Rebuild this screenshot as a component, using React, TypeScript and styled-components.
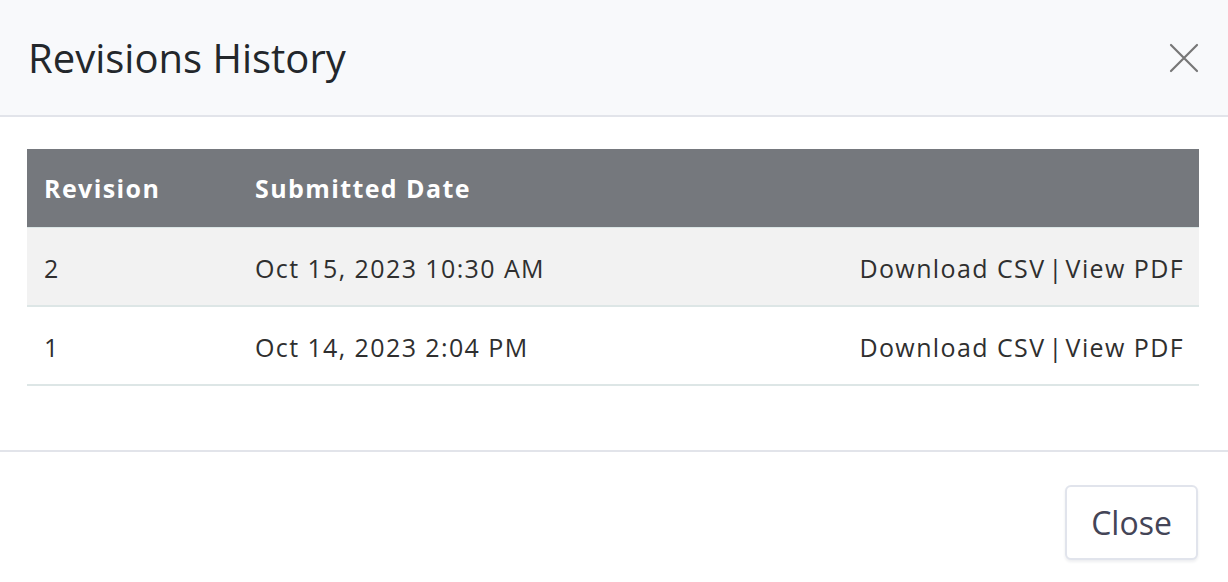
import React from "react";
import styled, { createGlobalStyle } from "styled-components";

const Global = createGlobalStyle`
  html, body { margin: 0; padding: 0; background: #ffffff; }
  body { font-family: "Open Sans", "Liberation Sans", sans-serif; }
`;

const Modal = styled.div`
  width: 1228px;
  height: 582px;
  display: flex;
  flex-direction: column;
  background: #ffffff;
  overflow: hidden;
`;

const Header = styled.header`
  height: 117px;
  flex: none;
  box-sizing: border-box;
  display: flex;
  align-items: center;
  justify-content: space-between;
  padding: 0 29px 0 28px;
  background: #f8f9fb;
  border-bottom: 2px solid #e2e4ea;
`;

const Title = styled.h1`
  margin: 0;
  font-size: 40px;
  font-weight: 400;
  color: #23272b;
  letter-spacing: 0;
`;

const CloseIcon = styled.button`
  width: 30px;
  height: 30px;
  padding: 0;
  border: 0;
  background: transparent;
  display: flex;
  align-items: center;
  justify-content: center;
  cursor: pointer;
`;

const Body = styled.div`
  padding: 32px 29px 64px 27px;
  border-bottom: 2px solid #e2e4ea;
`;

const Table = styled.table`
  width: 100%;
  border-collapse: collapse;
  font-size: 25px;
  letter-spacing: 1.4px;
  color: #2f2f2f;
`;

const HeadCell = styled.th<{ $w?: number }>`
  background: #75787d;
  color: #ffffff;
  font-weight: 700;
  text-align: left;
  height: 78px;
  padding: 0 16px 0 17px;
  border-bottom: 1px solid #dbe6e6;
  width: ${(p) => (p.$w ? `${p.$w}px` : "auto")};
  box-sizing: border-box;
`;

const Row = styled.tr<{ $striped?: boolean }>`
  background: ${(p) => (p.$striped ? "#f2f2f2" : "#ffffff")};
`;

const Cell = styled.td<{ $align?: "left" | "right" }>`
  height: 79px;
  padding: 3px 15px 0 17px;
  text-align: ${(p) => p.$align ?? "left"};
  border-bottom: 2px solid #dde6e6;
  box-sizing: border-box;
  white-space: nowrap;
`;

const ActionLink = styled.a`
  color: #2f2f2f;
  text-decoration: none;
  cursor: pointer;
`;

const Sep = styled.span`
  padding: 0 2px 0 3px;
`;

const Footer = styled.footer`
  flex: 1;
  display: flex;
  align-items: flex-start;
  justify-content: flex-end;
  padding: 33px 30px 0 0;
`;

const Button = styled.button`
  width: 133px;
  height: 75px;
  border: 2px solid #e1e4ec;
  border-radius: 6px;
  background: #ffffff;
  box-shadow: 0 2px 3px rgba(30, 40, 70, 0.08);
  font-family: "Open Sans", "Liberation Sans", sans-serif;
  font-size: 32px;
  color: #444557;
  cursor: pointer;
  padding: 0;
`;

const rows = [
  { rev: "2", date: "Oct 15, 2023 10:30 AM" },
  { rev: "1", date: "Oct 14, 2023 2:04 PM" },
];

export default function App() {
  return (
    <Modal>
      <Global />
      <Header>
        <Title>Revisions History</Title>
        <CloseIcon aria-label="Close">
          <svg width="30" height="30" viewBox="0 0 30 30">
            <path d="M2 2 L28 28 M28 2 L2 28" stroke="#777777" strokeWidth="2.2" strokeLinecap="round" />
          </svg>
        </CloseIcon>
      </Header>
      <Body>
        <Table>
          <thead>
            <tr>
              <HeadCell $w={211}>Revision</HeadCell>
              <HeadCell $w={457}>Submitted Date</HeadCell>
              <HeadCell />
            </tr>
          </thead>
          <tbody>
            {rows.map((r, i) => (
              <Row key={r.rev} $striped={i === 0}>
                <Cell>{r.rev}</Cell>
                <Cell>{r.date}</Cell>
                <Cell $align="right">
                  <ActionLink>Download CSV</ActionLink>
                  <Sep>|</Sep>
                  <ActionLink>View PDF</ActionLink>
                </Cell>
              </Row>
            ))}
          </tbody>
        </Table>
      </Body>
      <Footer>
        <Button>Close</Button>
      </Footer>
    </Modal>
  );
}
